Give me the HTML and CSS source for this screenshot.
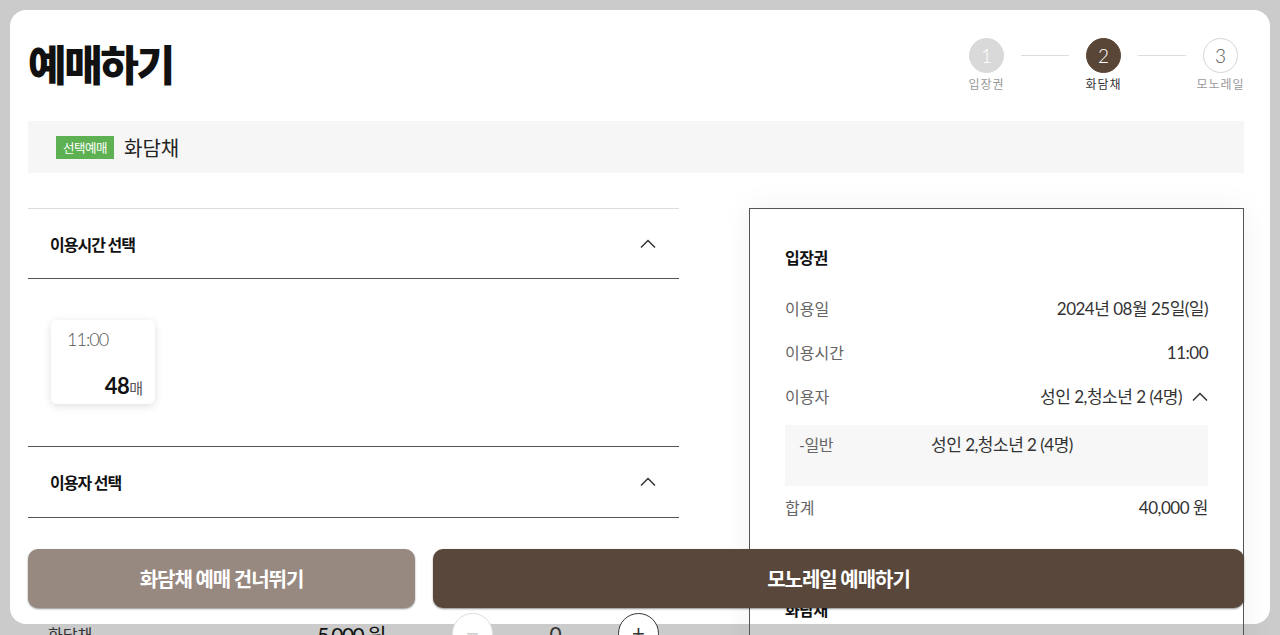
FILE: index.html
```html
<!DOCTYPE html>
<html>
<head>
  <title>예매하기</title>
  <link rel="stylesheet" href="styles.css">
</head>
<body>
  <div class="modal">
    <div class="modal-head">
      <h1>예매하기</h1>
      <div class="steps">
        <div class="step done">
          <span class="step-num">1</span>
          <span class="step-label">입장권</span>
        </div>
        <span class="step-line"></span>
        <div class="step active">
          <span class="step-num">2</span>
          <span class="step-label">화담채</span>
        </div>
        <span class="step-line"></span>
        <div class="step">
          <span class="step-num">3</span>
          <span class="step-label">모노레일</span>
        </div>
      </div>
    </div>

    <div class="product-bar">
      <span class="badge">선택예매</span>
      <span class="product-name">화담채</span>
    </div>

    <div class="booking">
      <div class="booking-left">
        <div class="acc first">
          <div class="acc-head">
            <span>이용시간 선택</span>
            <svg class="chevron" width="16" height="10" viewBox="0 0 16 10"><polyline points="1,8.5 8,1.5 15,8.5" fill="none" stroke="#333" stroke-width="1.5"/></svg>
          </div>
          <div class="acc-body times">
            <div class="time-card">
              <span class="time">11:00</span>
              <span class="count"><b>48</b>매</span>
            </div>
          </div>
        </div>

        <div class="acc">
          <div class="acc-head">
            <span>이용자 선택</span>
            <svg class="chevron" width="16" height="10" viewBox="0 0 16 10"><polyline points="1,8.5 8,1.5 15,8.5" fill="none" stroke="#333" stroke-width="1.5"/></svg>
          </div>
          <div class="acc-body users">
            <div class="user-row">
              <span class="user-name">화담채</span>
              <span class="user-price">5,000 원</span>
              <button class="qty-btn minus">&minus;</button>
              <span class="qty">0</span>
              <button class="qty-btn plus">+</button>
            </div>
          </div>
        </div>
      </div>

      <div class="summary">
        <div class="sum-title">입장권</div>
        <div class="sum-row"><span class="sum-label">이용일</span><span class="sum-value">2024년 08월 25일(일)</span></div>
        <div class="sum-row"><span class="sum-label">이용시간</span><span class="sum-value">11:00</span></div>
        <div class="sum-row">
          <span class="sum-label">이용자</span>
          <span class="sum-value">성인 2,청소년 2 (4명)
            <svg class="chevron small" width="16" height="10" viewBox="0 0 16 10"><polyline points="1,8.5 8,1.5 15,8.5" fill="none" stroke="#333" stroke-width="1.5"/></svg>
          </span>
        </div>
        <div class="sum-detail">
          <span class="detail-label">-일반</span>
          <span>성인 2,청소년 2 (4명)</span>
        </div>
        <div class="sum-row"><span class="sum-label">합계</span><span class="sum-value">40,000 원</span></div>

        <div class="sum-title second">화담채</div>
        <div class="sum-row"><span class="sum-label">이용일</span><span class="sum-value">2024년 08월 25일(일)</span></div>
        <div class="sum-row"><span class="sum-label">이용시간</span><span class="sum-value">11:00</span></div>
      </div>
    </div>

    <div class="actions">
      <button class="btn skip">화담채 예매 건너뛰기</button>
      <button class="btn next">모노레일 예매하기</button>
    </div>
  </div>
</body>
</html>
```

FILE: styles.css
```css
html, body {
  height: 100%;
  overflow: hidden;
}

body {
  margin: 0;
  padding: 10px;
  box-sizing: border-box;
  background-color: #cbcbcb;
  font-family: Lato, "Noto Sans CJK KR", sans-serif;
  color: #333;
}

.modal {
  position: relative;
  height: 614px;
  padding: 0 26px 0 18px;
  box-sizing: border-box;
  background-color: #fff;
  border-radius: 16px;
}

.modal-head {
  display: flex;
  justify-content: space-between;
  align-items: flex-start;
  height: 111px;
  padding-top: 28px;
  box-sizing: border-box;
}

.modal-head h1 {
  margin: 0;
  font-family: "Noto Sans CJK KR", sans-serif;
  font-size: 42px;
  line-height: 50px;
  font-weight: 900;
  letter-spacing: -2.5px;
  color: #111;
}

/* steps */
.steps {
  display: flex;
  align-items: flex-start;
  margin-right: 6px;
}

.step {
  display: flex;
  flex-direction: column;
  align-items: center;
  width: 35px;
}

.step-num {
  width: 35px;
  height: 35px;
  box-sizing: border-box;
  border-radius: 50%;
  border: 1px solid #d6d6d6;
  background-color: #fff;
  color: #555;
  font-size: 19px;
  font-weight: 300;
  line-height: 33px;
  text-align: center;
}

.step.done .step-num {
  background-color: #d9d9d9;
  border-color: #d9d9d9;
  color: #fff;
}

.step.active .step-num {
  background-color: #5a4637;
  border-color: #5a4637;
  color: #fff;
}

.step-label {
  margin-top: 3px;
  font-family: "Noto Sans CJK KR", sans-serif;
  font-size: 12px;
  line-height: 16px;
  letter-spacing: 1px;
  white-space: nowrap;
  color: #999;
}

.step.active .step-label {
  color: #333;
}

.step-line {
  width: 48px;
  height: 1px;
  margin: 17px 17px 0;
  background-color: #ddd;
}

/* product bar */
.product-bar {
  display: flex;
  align-items: center;
  gap: 10px;
  height: 52px;
  padding-left: 28px;
  background-color: #f6f6f6;
}

.badge {
  padding: 0 7px;
  height: 23px;
  line-height: 23px;
  background-color: #5db152;
  color: #fff;
  font-family: "Noto Sans CJK KR", sans-serif;
  font-size: 12.5px;
  letter-spacing: -0.5px;
}

.product-name {
  font-family: "Noto Sans CJK KR", sans-serif;
  font-size: 20px;
  color: #222;
}

/* booking */
.booking {
  display: flex;
  justify-content: space-between;
  margin-top: 35px;
}

.booking-left {
  width: 651px;
}

.acc.first {
  border-top: 1px solid #ddd;
}

.acc-head {
  display: flex;
  justify-content: space-between;
  align-items: center;
  height: 69px;
  padding: 0 23px 0 22px;
  border-bottom: 1px solid #555;
  font-family: "Noto Sans CJK KR", sans-serif;
  font-size: 16px;
  font-weight: 700;
  letter-spacing: -1px;
  color: #111;
}

.acc + .acc .acc-head {
  height: 70px;
}

.acc-body.times {
  padding: 41px 23px 42px;
  border-bottom: 1px solid #555;
}

.time-card {
  display: flex;
  flex-direction: column;
  justify-content: space-between;
  width: 104px;
  height: 84px;
  padding: 8px 12px 5px 16px;
  box-sizing: border-box;
  border-radius: 6px;
  background-color: #fff;
  box-shadow: 0 2px 8px rgba(0, 0, 0, 0.13);
}

.time {
  font-size: 18px;
  font-weight: 300;
  color: #555;
  letter-spacing: -1px;
}

.count {
  align-self: flex-end;
  font-family: "Noto Sans CJK KR", sans-serif;
  font-size: 15px;
  color: #555;
}

.count b {
  font-family: Lato, sans-serif;
  font-size: 22px;
  font-weight: 700;
  color: #111;
  letter-spacing: -0.5px;
}

.acc-body.users {
  padding-top: 95px;
}

.user-row {
  display: flex;
  align-items: center;
  padding: 0 20px;
}

.user-name {
  width: 200px;
  font-family: "Noto Sans CJK KR", sans-serif;
  font-size: 16px;
}

.user-price {
  width: 137px;
  text-align: right;
  font-size: 21px;
  color: #111;
  letter-spacing: -1.5px;
}

.qty-btn {
  width: 41px;
  height: 41px;
  padding: 0;
  border-radius: 50%;
  background-color: #fff;
  font-size: 22px;
  line-height: 1;
}

.qty-btn.minus {
  margin-left: 67px;
  border: 1px solid #ddd;
  color: #ccc;
}

.qty-btn.plus {
  border: 1px solid #333;
  color: #333;
}

.qty {
  width: 125px;
  text-align: center;
  font-size: 21px;
}

/* summary */
.summary {
  width: 495px;
  height: 700px;
  padding: 36px 35px;
  box-sizing: border-box;
  border: 1px solid #555;
  box-shadow: 0 0 30px rgba(0, 0, 0, 0.06);
  flex-shrink: 0;
}

.sum-title {
  font-family: "Noto Sans CJK KR", sans-serif;
  font-size: 16px;
  font-weight: 700;
  line-height: 24px;
  color: #111;
  letter-spacing: -0.5px;
}

.sum-title.second {
  margin-top: 67px;
}

.sum-row {
  display: flex;
  justify-content: space-between;
  align-items: center;
  padding: 10px 0;
  line-height: 24px;
  font-size: 16px;
}

.sum-title + .sum-row {
  margin-top: 18px;
}

.sum-label {
  color: #666;
}

.sum-value {
  display: flex;
  align-items: center;
  gap: 10px;
  color: #333;
  font-size: 17px;
  letter-spacing: -0.5px;
}

.sum-detail {
  display: flex;
  height: 61px;
  margin-top: 6px;
  padding: 8px 14px 0;
  box-sizing: border-box;
  background-color: #f7f7f7;
  font-size: 17px;
  line-height: 24px;
  color: #333;
  letter-spacing: -0.5px;
}

.detail-label {
  width: 132px;
  font-size: 16px;
  color: #666;
}

/* bottom buttons */
.actions {
  position: absolute;
  left: 18px;
  right: 26px;
  bottom: 16px;
  display: flex;
  gap: 18px;
}

.btn {
  height: 59px;
  border: none;
  border-radius: 10px;
  color: #fff;
  font-family: "Noto Sans CJK KR", sans-serif;
  font-size: 20px;
  font-weight: 700;
  letter-spacing: -1px;
  box-shadow: 0 1px 2px rgba(0, 0, 0, 0.45);
}

.btn.skip {
  width: 387px;
  background-color: #978880;
}

.btn.next {
  flex: 1;
  background-color: #58473a;
}
```
